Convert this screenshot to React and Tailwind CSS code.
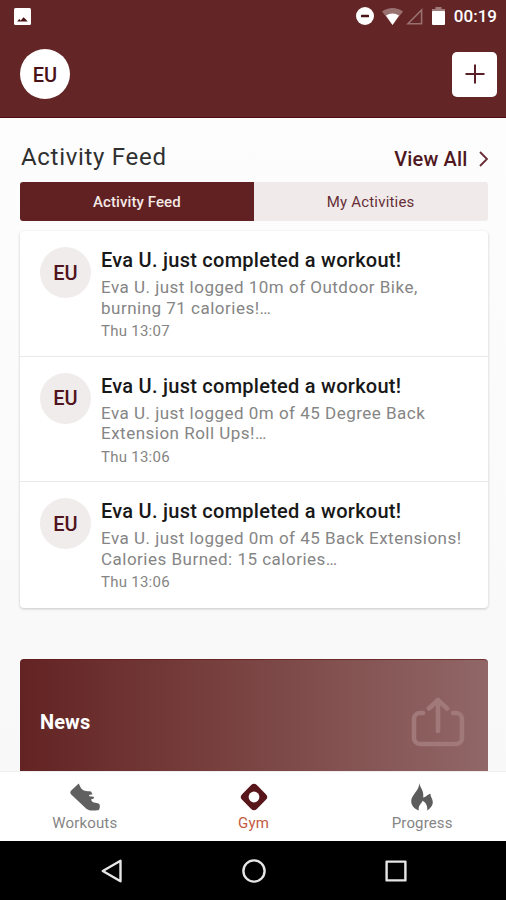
import React, { useState } from "react";

const activities = [
  {
    id: 1,
    initials: "EU",
    title: "Eva U. just completed a workout!",
    lines: ["Eva U. just logged 10m of Outdoor Bike,", "burning 71 calories!…"],
    time: "Thu 13:07",
  },
  {
    id: 2,
    initials: "EU",
    title: "Eva U. just completed a workout!",
    lines: ["Eva U. just logged 0m of 45 Degree Back", "Extension Roll Ups!…"],
    time: "Thu 13:06",
  },
  {
    id: 3,
    initials: "EU",
    title: "Eva U. just completed a workout!",
    lines: ["Eva U. just logged 0m of 45 Back Extensions!", "Calories Burned: 15 calories…"],
    time: "Thu 13:06",
  },
];

function StatusBar() {
  return (
    <div className="flex h-8 items-center justify-between pl-3.5 pr-[9px] text-white">
      <svg width="17" height="17" viewBox="0 0 17 17">
        <rect width="17" height="17" rx="1.5" fill="#fff" />
        <path d="M3.2 13.5l2-2.4 1.6 1.4 2.7-3.3 2 1.8 2.2 2.5z" fill="#4a1416" />
      </svg>
      <div className="flex items-center">
        <svg width="18" height="18" viewBox="0 0 18 18">
          <circle cx="9" cy="9" r="9" fill="#fff" />
          <rect x="5" y="7.8" width="8" height="2.4" rx="0.5" fill="#4a1416" />
        </svg>
        <svg className="ml-2" width="21" height="17" viewBox="0 0 21 17">
          <path d="M0 3.6C6 -1.2 15 -1.2 21 3.6L10.5 17z" fill="#fff" opacity="0.35" />
          <path d="M4 7.6c4-2.8 9-2.8 13 0L10.5 17z" fill="#fff" />
        </svg>
        <svg className="ml-[3px]" width="17" height="17" viewBox="0 0 17 17">
          <path d="M15.6 2v13.8H2z" fill="none" stroke="#fff" strokeWidth="1.6" opacity="0.35" />
        </svg>
        <svg className="ml-[9px]" width="13" height="18" viewBox="0 0 13 18">
          <path d="M3.5 0h6v2H13v3H0V2h3.5z" fill="#fff" opacity="0.4" />
          <rect y="4" width="13" height="14" rx="1" fill="#fff" />
        </svg>
        <span className="ml-[9px] text-[17px] font-medium leading-none">00:19</span>
      </div>
    </div>
  );
}

function Header() {
  return (
    <header className="h-[118px] shrink-0 border-b border-[#4e0d10] bg-[#632525]">
      <StatusBar />
      <div className="flex items-center justify-between pl-5 pr-[9px] pt-[17px]">
        <div className="flex size-[50px] items-center justify-center rounded-full bg-white pt-0.5 text-[20px] font-medium text-[#4a1118]">
          EU
        </div>
        <button type="button" aria-label="Add" className="flex size-[45px] items-center justify-center rounded-[5px] bg-white">
          <svg width="20" height="20" viewBox="0 0 20 20" stroke="#5a2028" strokeWidth="2">
            <path d="M10 0.5v19M0.5 10h19" />
          </svg>
        </button>
      </div>
    </header>
  );
}

function ActivityRow({ activity }) {
  return (
    <li className="flex h-[125.5px] gap-2.5 border-b border-[#e9e9e9] pl-5 pt-4 last:border-b-0">
      <div className="flex size-[51px] shrink-0 items-center justify-center rounded-full bg-[#f0ecec] text-[20px] font-medium text-[#50151c]">
        {activity.initials}
      </div>
      <div className="whitespace-nowrap">
        <h3 className="text-[20px] font-medium leading-[26px] tracking-[0.26px] text-[#181818]">{activity.title}</h3>
        <p className="mt-1 text-[17px] leading-[20.5px] tracking-[0.49px] text-[#858585]">
          {activity.lines[0]}
          <br />
          {activity.lines[1]}
        </p>
        <p className="mt-1 text-[15px] leading-[18px] tracking-[0.25px] text-[#858585]">{activity.time}</p>
      </div>
    </li>
  );
}

/* Bottom tab icons */
function ShoeIcon() {
  return (
    <svg className="ml-px" width="30" height="28" viewBox="0 0 30 28" fill="#606060">
      <path d="M8.7 0.5L10.8 4.8C12.5 7.8 16 8.3 21 8.4L22.5 11.2L19 12.1L19.3 13.2L23.8 13.8V15.6L21 16.4L22 18.5C24 20.2 27.5 19.6 29 20.8C30.5 22.2 29.7 25.5 29 26.7C28 27.5 25 27.4 21 27.4C18.5 27.4 16.7 26.2 15 24.5L1.2 11.6C-.1 10 .1 8.8 1.2 7.5Z" />
    </svg>
  );
}

function GymIcon() {
  return (
    <svg className="ml-px" width="28" height="28" viewBox="0 0 28 28">
      <rect x="3.6" y="3.6" width="20.8" height="20.8" rx="4" transform="rotate(45 14 14)" fill="#58151a" />
      <circle cx="14" cy="14" r="5.4" fill="#fff" />
    </svg>
  );
}

function FlameIcon() {
  return (
    <svg className="ml-px" width="24" height="28" viewBox="0 0 24 28" fill="#5c5c5c">
      <path d="M9.3 0C9.8 4.5 14.3 7.2 13.2 14.5C16.4 14 17.6 11 20.4 10.7C20.4 14 22.9 15.8 22.8 19.5C22.7 22.5 20 26 17.2 27.5C17.8 22.5 15.7 19.5 12.6 17.7C11.6 20.5 8 22 8.8 27.5C4.5 26 1.2 22.5 1.2 18C1.2 12 9.4 7.5 9.3 0Z" />
    </svg>
  );
}

const tabs = [
  { name: "Workouts", Icon: ShoeIcon },
  { name: "Gym", Icon: GymIcon },
  { name: "Progress", Icon: FlameIcon },
];

export default function App() {
  const [feed, setFeed] = useState("Activity Feed");
  const [activeTab, setActiveTab] = useState("Gym");

  return (
    <div className="flex h-[900px] w-[506px] flex-col overflow-hidden bg-[#fafafa] font-[Roboto,sans-serif]">
      <Header />

      <main className="min-h-0 flex-1 overflow-hidden bg-linear-to-b from-[#fdfdfd] to-[#f8f8f8] pl-5 pr-[18.5px] pt-6">
        <div className="flex h-[30px] items-center justify-between">
          <h2 className="pl-px text-[24px] tracking-[0.7px] text-[#303030]">Activity Feed</h2>
          <button type="button" className="mt-[3px] flex items-center gap-[11px] text-[20px] font-medium tracking-[0.15px] text-[#4f1720]">
            View All
            <svg width="9" height="16" viewBox="0 0 9 16" fill="none" stroke="#672a34" strokeWidth="1.8">
              <path d="M1 1l7 7-7 7" />
            </svg>
          </button>
        </div>

        {/* Feed switch */}
        <div className="mt-2.5 flex h-[39px] overflow-hidden rounded-[3px] bg-[#f0ebea] text-[15px]">
          {["Activity Feed", "My Activities"].map((name) => (
            <button
              key={name}
              type="button"
              onClick={() => setFeed(name)}
              className={`flex-1 pt-0.5 ${
                feed === name ? "bg-[#612022] font-medium tracking-[0.1px] text-[#f4e9e6]" : "tracking-[0.2px] text-[#672e36]"
              }`}
            >
              {name}
            </button>
          ))}
        </div>

        <ul className="mt-2.5 rounded-[4px] bg-white shadow-[0_1px_3px_rgba(0,0,0,0.2)]">
          {activities.map((activity) => (
            <ActivityRow key={activity.id} activity={activity} />
          ))}
        </ul>

        {/* News banner */}
        <div className="mt-[51.5px] flex h-[125px] items-center justify-between rounded-[4px] border-t border-[#641a1c]/70 bg-linear-to-r from-[#632323] to-[#916767] pl-5 pr-[23px]">
          <span className="text-[20px] font-bold tracking-[0.1px] text-white">News</span>
          <svg width="54" height="50" viewBox="0 0 54 50" fill="none" stroke="#a17979" strokeWidth="4.6" strokeLinecap="round" strokeLinejoin="round">
            <path d="M12 16H9a6 6 0 0 0-6 6v19a6 6 0 0 0 6 6h36a6 6 0 0 0 6-6V22a6 6 0 0 0-6-6h-3" />
            <path d="M27 34V3M18 11.5L27 3l9 8.5" />
          </svg>
        </div>
      </main>

      <nav className="flex h-[70px] shrink-0 border-t border-[#eeeeee] bg-white">
        {tabs.map(({ name, Icon }) => (
          <button
            key={name}
            type="button"
            onClick={() => setActiveTab(name)}
            className={`flex flex-1 flex-col items-center pt-[11px] text-[15px] leading-[18px] tracking-[0.15px] ${
              activeTab === name ? "text-[#c25b43]" : "text-[#858585]"
            }`}
          >
            <Icon />
            <span className="mt-[3px] pl-px">{name}</span>
          </button>
        ))}
      </nav>

      {/* Android navigation */}
      <div className="flex h-[59px] shrink-0 items-center justify-between bg-black pl-[101px] pr-[99px]">
        <svg width="21" height="24" viewBox="0 0 21 24" fill="none" stroke="#e6e6e6" strokeWidth="2.4" strokeLinejoin="round">
          <path d="M19.5 1.8v20.4L1.8 12z" />
        </svg>
        <svg width="24" height="24" viewBox="0 0 24 24" fill="none" stroke="#e6e6e6" strokeWidth="2.4">
          <circle cx="12" cy="12" r="10.6" />
        </svg>
        <svg width="22" height="22" viewBox="0 0 22 22" fill="none" stroke="#e6e6e6" strokeWidth="2.4" strokeLinejoin="round">
          <rect x="1.6" y="1.6" width="18.8" height="18.8" />
        </svg>
      </div>
    </div>
  );
}
